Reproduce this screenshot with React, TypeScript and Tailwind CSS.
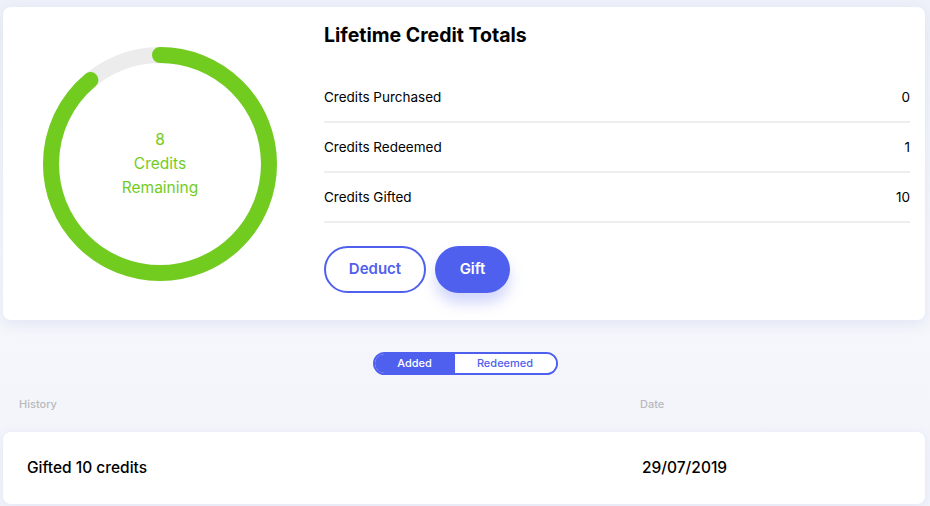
import React from "react";

const R = 109;
const C = 2 * Math.PI * R;

function CreditRing({ remaining, total }: { remaining: number; total: number }) {
  const frac = remaining / total;
  return (
    <div className="relative w-[234px] h-[234px]">
      <svg width="234" height="234" viewBox="0 0 234 234" className="absolute inset-0">
        <circle cx="117" cy="117" r={R} fill="none" stroke="#ececec" strokeWidth="16" />
        <circle
          cx="117"
          cy="117"
          r={R}
          fill="none"
          stroke="#72cc1f"
          strokeWidth="16"
          strokeLinecap="round"
          strokeDasharray={`${C * frac} ${C}`}
          transform="rotate(-90 117 117)"
        />
      </svg>
      <div className="absolute inset-0 flex flex-col items-center justify-center text-[15.5px] leading-[24px] text-[#72cc1f]">
        <span>{remaining}</span>
        <span>Credits</span>
        <span>Remaining</span>
      </div>
    </div>
  );
}

const totals = [
  { label: "Credits Purchased", value: 0 },
  { label: "Credits Redeemed", value: 1 },
  { label: "Credits Gifted", value: 10 },
];

export default function App() {
  return (
    <div
      className="min-h-[506px] w-[930px] bg-gradient-to-b from-[#eef1f9] via-[#f7f8fc] to-[#f1f3fa] pt-[7px] px-[3px] text-black"
      style={{ fontFamily: "Inter, 'Noto Sans', sans-serif" }}
    >
      {/* Summary card */}
      <div className="w-[922px] h-[313px] bg-white rounded-[8px] shadow-[0_4px_14px_rgba(200,208,235,0.45)] flex items-center">
        <div className="pl-[40px]">
          <CreditRing remaining={8} total={9} />
        </div>
        <div className="ml-[47px] flex-1 pr-[15px] self-start pt-[16px]">
          <h2 className="text-[19.5px] leading-[24px] font-bold">Lifetime Credit Totals</h2>
          <div className="mt-[26px]">
            {totals.map((t) => (
              <div key={t.label} className="h-[50px] flex items-center justify-between border-b-2 border-[#eeeeee] text-[13.5px]">
                <span>{t.label}</span>
                <span>{t.value}</span>
              </div>
            ))}
          </div>
          <div className="mt-[23px] flex gap-[9px]">
            <button className="h-[47px] w-[102px] rounded-full border-2 border-[#5060ee] text-[#5060ee] text-[15px] font-semibold">
              Deduct
            </button>
            <button className="h-[47px] w-[75px] rounded-full bg-[#5060ee] text-white text-[15px] font-semibold shadow-[0_10px_14px_rgba(80,96,238,0.25)]">
              Gift
            </button>
          </div>
        </div>
      </div>

      {/* Toggle */}
      <div className="mt-[32px] flex justify-center">
        <div className="flex h-[23px] rounded-full border-2 border-[#5060ee] overflow-hidden text-[11px] font-medium">
          <span className="w-[80px] flex items-center justify-center bg-[#5060ee] text-white">Added</span>
          <span className="w-[101px] flex items-center justify-center bg-white text-[#5060ee]">Redeemed</span>
        </div>
      </div>

      {/* History header */}
      <div className="mt-[21px] flex text-[11px] text-[#b9b9bd] font-medium px-[16px]">
        <span className="w-[621px]">History</span>
        <span>Date</span>
      </div>

      {/* History row */}
      <div className="mt-[19px] h-[72px] w-[922px] bg-white rounded-[8px] flex items-center px-[24px] text-[15.5px] font-medium shadow-[0_2px_8px_rgba(200,208,235,0.35)]">
        <span className="w-[615px]">Gifted 10 credits</span>
        <span>29/07/2019</span>
      </div>
    </div>
  );
}
